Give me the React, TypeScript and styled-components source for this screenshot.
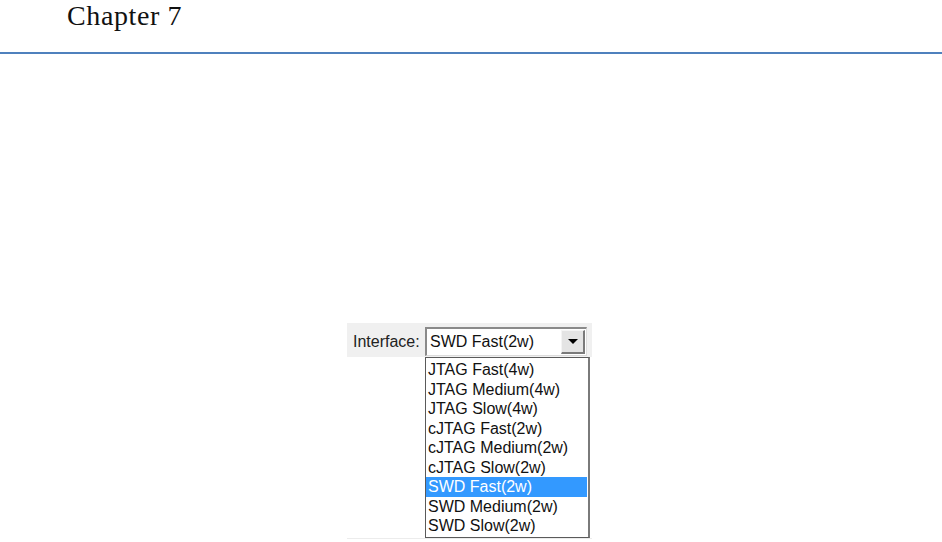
import React, { FC } from "react";
import styled, { createGlobalStyle } from "styled-components";

const GlobalStyle = createGlobalStyle`
  html, body {
    margin: 0;
    padding: 0;
    background: #ffffff;
  }
`;

const options = [
  "JTAG Fast(4w)",
  "JTAG Medium(4w)",
  "JTAG Slow(4w)",
  "cJTAG Fast(2w)",
  "cJTAG Medium(2w)",
  "cJTAG Slow(2w)",
  "SWD Fast(2w)",
  "SWD Medium(2w)",
  "SWD Slow(2w)",
];

const selected = "SWD Fast(2w)";

const Page = styled.div`
  width: 942px;
  height: 542px;
  overflow: hidden;
  display: flex;
  flex-direction: column;
`;

const Header = styled.header`
  height: 52px;
  padding-left: 67px;
  font-family: "Liberation Serif", "DejaVu Serif", serif;
  font-size: 28px;
  letter-spacing: 0.6px;
  line-height: 31px;
  color: #111;
  box-sizing: border-box;
`;

const Rule = styled.div`
  height: 2px;
  background: #4f81bd;
`;

const Figure = styled.div`
  position: relative;
  margin: 269px 0 0 347px;
  width: 245px;
  height: 215px;
  border-bottom: 1px solid #ececec;
  font-family: "Liberation Sans", Arial, sans-serif;
  font-size: 16px;
`;

const Toolbar = styled.div`
  display: flex;
  align-items: center;
  height: 34px;
  padding-left: 6px;
  background: #f0f0f0;
  box-sizing: border-box;
`;

const Label = styled.span`
  width: 72px;
  color: #222;
  padding-top: 3px;
`;

const Combo = styled.div`
  display: flex;
  align-items: stretch;
  width: 162px;
  height: 29px;
  margin-top: 3px;
  background: #fff;
  border-top: 2px solid #8a8a8a;
  border-left: 2px solid #8a8a8a;
  border-right: 1px solid #dcdcdc;
  border-bottom: 1px solid #dcdcdc;
  box-sizing: border-box;
`;

const ComboText = styled.span`
  flex: 1;
  padding-left: 3px;
  line-height: 25px;
  color: #111;
`;

const ComboButton = styled.div`
  width: 24px;
  display: flex;
  align-items: center;
  justify-content: center;
  background: #e4e4e4;
  border-top: 1px solid #f4f4f4;
  border-left: 1px solid #f4f4f4;
  border-right: 2px solid #7a7a7a;
  border-bottom: 2px solid #7a7a7a;
  box-sizing: border-box;
  margin: 1px 1px 1px 0;
`;

const Arrow = styled.span`
  width: 0;
  height: 0;
  border-left: 5px solid transparent;
  border-right: 5px solid transparent;
  border-top: 5px solid #000;
`;

const List = styled.ul`
  position: absolute;
  left: 78px;
  top: 34px;
  width: 165px;
  height: 181px;
  margin: 0;
  padding: 2px 0 0;
  list-style: none;
  background: #fff;
  border: 1px solid #5a5a5a;
  border-right: 2px solid #7a7a7a;
  box-sizing: border-box;
`;

const Item = styled.li<{ $active?: boolean }>`
  height: 19.5px;
  line-height: 19.5px;
  padding-left: 2px;
  margin-right: 1px;
  white-space: nowrap;
  color: ${(p) => (p.$active ? "#fff" : "#111")};
  background: ${(p) => (p.$active ? "#3399ff" : "transparent")};
`;

const App: FC = () => (
  <Page>
    <GlobalStyle />
    <Header>Chapter 7</Header>
    <Rule />
    <Figure>
      <Toolbar>
        <Label>Interface:</Label>
        <Combo>
          <ComboText>{selected}</ComboText>
          <ComboButton>
            <Arrow />
          </ComboButton>
        </Combo>
      </Toolbar>
      <List>
        {options.map((o) => (
          <Item key={o} $active={o === selected}>
            {o}
          </Item>
        ))}
      </List>
    </Figure>
  </Page>
);

export default App;
